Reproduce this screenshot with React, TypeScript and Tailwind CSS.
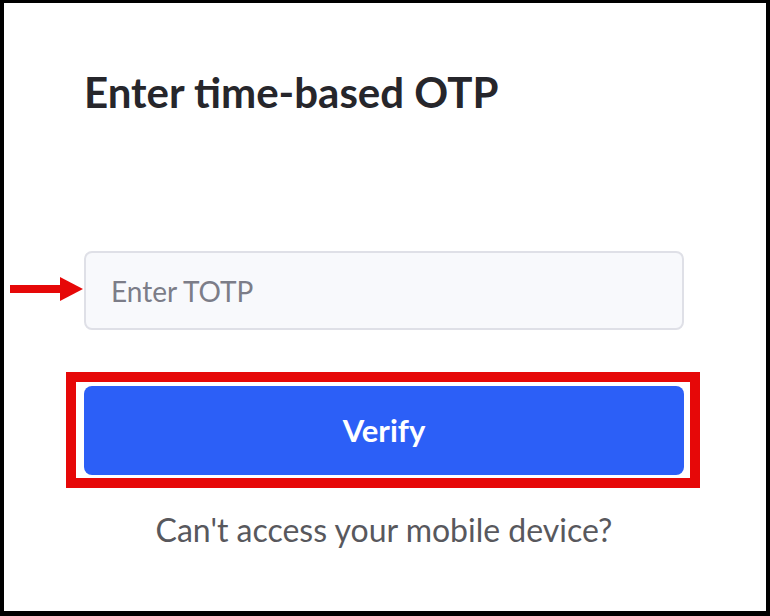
const App = () => {
  return (
    <div
      className="w-[770px] h-[616px] bg-white border-black border-t-[3px] border-l-[4px] border-r-[4px] border-b-[5px] relative"
      style={{ fontFamily: "Lato, 'Open Sans', sans-serif" }}
    >
      <div className="pl-[80px] pt-[64px]">
        {/* Titel */}
        <h1 className="text-[42px] leading-[50px] font-bold text-[#26262b]">Enter time-based OTP</h1>

        {/* Eingabefeld */}
        <div className="mt-[134px] w-[600px] h-[79px] rounded-[8px] border-2 border-[#dfe0e7] bg-[#f8f9fc] flex items-center pl-[25px]">
          <span className="text-[28px] text-[#7c7d88]">Enter TOTP</span>
        </div>

        {/* Button */}
        <button className="mt-[56px] w-[600px] h-[89px] rounded-[8px] bg-[#2c5ff7] text-white text-[31px] font-bold flex items-center justify-center">
          Verify
        </button>

        <p className="mt-[36px] w-[600px] text-center text-[32px] leading-[38px] text-[#58585d]">
          Can't access your mobile device?
        </p>
      </div>

      {/* Markierungen */}
      <div className="absolute left-[6px] top-[274px] flex items-center">
        <div className="w-[50px] h-[8px] bg-[#e60808]"></div>
        <div className="w-0 h-0 border-t-[12px] border-b-[12px] border-l-[23px] border-t-transparent border-b-transparent border-l-[#e60808]"></div>
      </div>
      <div className="absolute left-[62px] top-[369px] w-[634px] h-[116px] border-[10px] border-[#e60808]"></div>
    </div>
  );
};

export default App;
